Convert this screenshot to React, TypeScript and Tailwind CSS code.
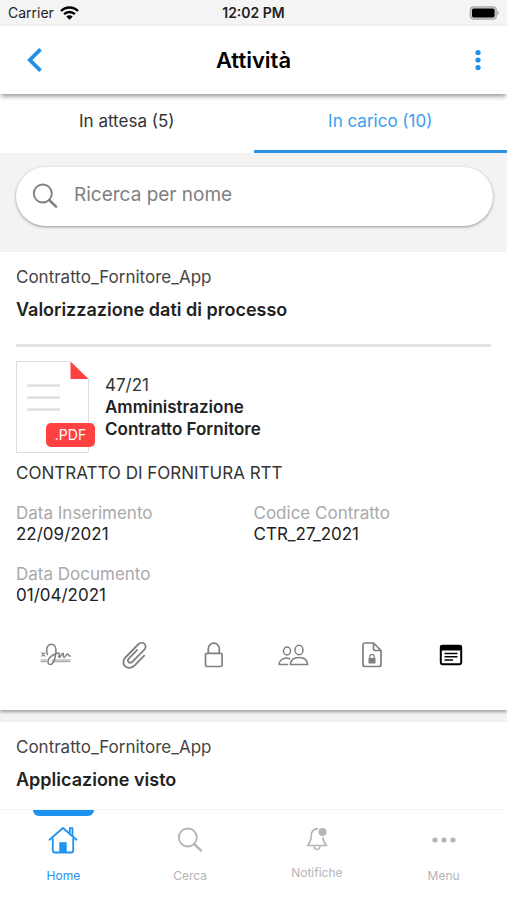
import type { ReactNode } from "react";

const SignatureIcon = () => (
  <svg width="32" height="24" viewBox="0 0 32 24" fill="none" stroke="currentColor" strokeLinecap="round" strokeLinejoin="round">
    <path d="M1.800 9.800l3 3.400M4.800 9.800l-3 3.400" strokeWidth="1.200" />
    <path
      d="M7.500 11.500C5.500 7 7 1.200 11.500 1.200c5 0 5 6.800 3.800 12.300-.9 4.400-2.600 8-5 8-2 0-2.700-2-2.100-4.200.8-3 4-4.900 6.900-6.300 2.600-1.200 4.200-1.300 4.300.2 0 1.500-1.600 2.800-.3 3.100 1.600.3 2.800-4.200 4-4 1 .2-.5 3.900 1 4.200 1.400.2 2-3.800 3.500-3.600 1.300.2.400 2.500 2.600 2.100"
      strokeWidth="1.500"
    />
    <path d="M1 17h5.500M12.500 17h17.500M1 18.700h5.500M12 18.700h18" strokeWidth=".8" />
  </svg>
);

const ClipIcon = () => (
  <svg width="26" height="28" viewBox="0 0 26 28" fill="none" stroke="currentColor" strokeWidth="1.800" strokeLinecap="round" strokeLinejoin="round">
    <path d="M22.200 14.600l-9.500 9.700c-3 3-7.300 3.300-9.700.9-2.400-2.400-2.100-6.300.8-9.200L16.100 3.500c2-2 4.700-2.200 6.400-.6 1.700 1.700 1.400 4.300-.6 6.300L10.500 20.700c-1.200 1.200-2.900 1.400-3.900.4s-.8-2.500.4-3.700l8.300-8.500" />
  </svg>
);

const LockIcon = () => (
  <svg width="22" height="28" viewBox="0 0 22 28" fill="none" stroke="currentColor" strokeWidth="1.700">
    <rect x="2.500" y="12.300" width="16.600" height="13.200" rx="1.500" />
    <path d="M5.300 12.300V7.700a5.500 5.500 0 0 1 11 0v4.600" />
  </svg>
);

const PeopleIcon = () => (
  <svg width="32" height="24" viewBox="0 0 32 24" fill="none" stroke="currentColor" strokeWidth="1.500" strokeLinecap="round" strokeLinejoin="round">
    <ellipse cx="10" cy="8" rx="3.500" ry="4" />
    <ellipse cx="22" cy="7" rx="4" ry="4.800" />
    <path d="M12.800 15.700c-4.500-1.800-10.200.3-10.800 5.700h8.500M13.300 21.400c.5-4.600 4-6.800 8.700-6.800s8.200 2.200 8.700 6.800z" />
  </svg>
);

const FileLockIcon = () => (
  <svg width="22" height="28" viewBox="0 0 22 28" fill="none" stroke="currentColor" strokeWidth="1.700" strokeLinejoin="round">
    <path d="M12.500 2H4a2 2 0 0 0-2 2v19.500a2 2 0 0 0 2 2h14a2 2 0 0 0 2-2V9.500zM12.500 2v5.500a2 2 0 0 0 2 2H20" />
    <path d="M8.800 17.500v-2a2.200 2.200 0 0 1 4.400 0v2" strokeWidth="1.200" />
    <rect x="7.500" y="17" width="7" height="5.500" rx=".6" fill="currentColor" stroke="none" />
  </svg>
);

const NoteIcon = () => (
  <svg width="24" height="22" viewBox="0 0 24 22" fill="none">
    <rect x="1.800" y="1.800" width="20.400" height="18.400" rx="2" stroke="currentColor" strokeWidth="2" />
    <path d="M1 6.500V3a2 2 0 0 1 2-2h18a2 2 0 0 1 2 2v3.500z" fill="currentColor" />
    <path d="M5.500 9.500h13M5.500 12.800h13M5.500 16h8.500" stroke="currentColor" strokeWidth="1.600" />
  </svg>
);

const SearchIcon = () => (
  <svg width="28" height="28" viewBox="-1 -1 28 28" fill="none" stroke="currentColor" strokeWidth="1.900" strokeLinecap="round">
    <circle cx="10.800" cy="10.500" r="9" />
    <path d="M17.200 17l6.800 6.600" strokeWidth="2.500" />
  </svg>
);

const HomeIcon = () => (
  <svg width="30" height="28" viewBox="0 0 30 28" fill="none" stroke="currentColor" strokeWidth="1.800" strokeLinecap="round" strokeLinejoin="round">
    <path d="M1.500 13.700L15 2l13.500 11.700" />
    <path d="M4.800 13v11.500a2 2 0 0 0 2 2h16.400a2 2 0 0 0 2-2V13" />
    <path d="M21.800 6.500V2.200h2.700v7" />
    <rect x="11.300" y="16.200" width="7.400" height="10.300" fill="currentColor" stroke="none" />
  </svg>
);

const BellIcon = () => (
  <svg width="28" height="25" viewBox="0 0 28 25" fill="none" stroke="currentColor" strokeWidth="1.600" strokeLinecap="round" strokeLinejoin="round">
    <path d="M14.500 2.600c-3.800.5-6.300 3.400-6.300 7.200 0 4.500-.7 6.700-3.800 9.700h19.200c-2.500-2.500-3.500-4.500-3.700-8" />
    <path d="M11 20.500c.3 2 1.500 3 3 3s2.700-1 3-3" />
    <circle cx="19.500" cy="6" r="4" fill="currentColor" stroke="none" />
  </svg>
);

const DotsIcon = () => (
  <svg width="28" height="28" viewBox="0 0 28 28" fill="currentColor">
    <circle cx="5" cy="14" r="2.600" />
    <circle cx="14" cy="14" r="2.600" />
    <circle cx="23" cy="14" r="2.600" />
  </svg>
);

const actions = [
  { label: "Firma", icon: <SignatureIcon /> },
  { label: "Allegati", icon: <ClipIcon /> },
  { label: "Blocca", icon: <LockIcon /> },
  { label: "Utenti", icon: <PeopleIcon /> },
  { label: "Documento protetto", icon: <FileLockIcon /> },
  { label: "Note", icon: <NoteIcon />, active: true },
];

const navItems = [
  { label: "Home", icon: <HomeIcon />, active: true },
  { label: "Cerca", icon: <SearchIcon /> },
  { label: "Notifiche", icon: <BellIcon /> },
  { label: "Menu", icon: <DotsIcon /> },
];

function StatusBar() {
  return (
    <div className="grid h-[26px] shrink-0 grid-cols-3 items-center bg-[#f4f4f4] px-2 text-sm text-[#222]">
      <div className="flex items-center gap-1.5">
        Carrier
        <svg width="19" height="14" viewBox="0 0 19 14" fill="none" stroke="#000" strokeWidth="2.400">
          <path d="M1 5C5.700.3 13.300.3 18 5M4.100 8.200c3-3 7.800-3 10.800 0" />
          <path d="M6.300 10.500a4.500 4.500 0 0 1 6.400 0L9.500 13.800z" fill="#000" stroke="none" />
        </svg>
      </div>
      <div className="text-center font-semibold">12:02 PM</div>
      <svg className="justify-self-end" width="30" height="14" viewBox="0 0 30 14">
        <rect x="1.300" y=".8" width="26" height="12.400" rx="3.500" fill="#ccc" stroke="#aaa" strokeWidth="1.200" />
        <rect x="3" y="2.500" width="22.600" height="9" rx="1.800" fill="#000" />
        <path d="M28.300 4.500c2 .8 2 4.200 0 5z" fill="#aaa" />
      </svg>
    </div>
  );
}

function Header() {
  return (
    <header className="relative z-10 grid h-[68px] shrink-0 grid-cols-[1fr_auto_1fr] items-center bg-white px-[19px] shadow-[0_3px_5px_-1px_rgba(0,0,0,0.45)]">
      <button aria-label="Indietro" className="flex size-8 items-center justify-center text-[#1f8fe8]">
        <svg width="18" height="26" viewBox="0 0 18 26" fill="none" stroke="currentColor" strokeWidth="3.800">
          <path d="M14.500 2.300L3.800 13l10.700 10.700" />
        </svg>
      </button>
      <h1 className="text-[22px] font-semibold text-black">Attività</h1>
      <button aria-label="Altre opzioni" className="flex h-8 w-5 items-center justify-center justify-self-end text-[#1f8fe8]">
        <svg width="6" height="22" viewBox="0 0 6 22" fill="currentColor">
          <circle cx="3" cy="3.500" r="2.600" />
          <circle cx="3" cy="11" r="2.600" />
          <circle cx="3" cy="18.500" r="2.600" />
        </svg>
      </button>
    </header>
  );
}

function Field({ label, value }: { label: string; value: string }) {
  return (
    <div className="leading-[21px]">
      <dt className="text-[#a9a9a9]">{label}</dt>
      <dd className="text-[#222]">{value}</dd>
    </div>
  );
}

function PdfThumb() {
  return (
    <div className="relative h-[92px] w-[73px] shrink-0">
      <svg width="73" height="92" viewBox="0 0 73 92" fill="none">
        <path d="M54.500.5H.5v91h72V18" stroke="#ddd" />
        <path d="M54.500.5l18 17.500h-18z" fill="#ff4141" />
        <path d="M11 24.500h33M11 36.500h33M11 48.500h33" stroke="#e0e0e0" strokeWidth="2.400" />
      </svg>
      <span className="absolute -right-1.5 bottom-1.5 flex h-6 w-[49px] items-center justify-center rounded-[5px] bg-[#ff4141] text-sm text-white">
        .PDF
      </span>
    </div>
  );
}

function Card({ process, title, children }: { process: string; title: string; children?: ReactNode }) {
  return (
    <article className="bg-white px-4 pt-3 shadow-[0_2px_3px_rgba(0,0,0,0.35)]">
      <p className="leading-[26px] text-[#444]">{process}</p>
      <h2 className="mt-1.5 text-lg leading-7 font-semibold text-[#222]">{title}</h2>
      {children}
    </article>
  );
}

export default function App() {
  return (
    <div className="flex h-screen flex-col bg-[#f3f3f3] font-['Inter','Liberation_Sans',sans-serif] text-[17px]">
      <StatusBar />
      <Header />
      <div role="tablist" className="grid h-[59px] shrink-0 grid-cols-2 bg-white">
        <button role="tab" aria-selected="false" className="border-b-3 border-transparent text-[#333]">
          In attesa (5)
        </button>
        <button role="tab" aria-selected="true" className="border-b-3 border-[#2a93e8] text-[#3a9dec]">
          In carico (10)
        </button>
      </div>

      <main className="min-h-0 flex-1 overflow-hidden">
        <div className="pt-3.5 pr-3.5 pb-[26px] pl-4">
          <label className="flex h-[59px] items-center gap-[15px] rounded-full bg-white pr-6 pb-0.5 pl-[15px] text-[#808080] shadow-[0_1px_3px_rgba(0,0,0,0.4)]">
            <SearchIcon />
            <input
              type="text"
              aria-label="Ricerca per nome"
              placeholder="Ricerca per nome"
              className="min-w-0 flex-1 text-[19px] outline-none placeholder:text-[#808080]"
            />
          </label>
        </div>

        <div className="space-y-3">
          <Card process="Contratto_Fornitore_App" title="Valorizzazione dati di processo">
            <hr className="mt-5 border-t-3 border-[#e2e2e2]" />
            <div className="mt-3.5 flex items-center gap-4">
              <PdfThumb />
              <div className="leading-[22px] text-[#222]">
                <p className="text-[#333]">47/21</p>
                <p className="font-semibold">Amministrazione</p>
                <p className="font-semibold">Contratto Fornitore</p>
              </div>
            </div>
            <p className="mt-2 leading-6 text-[#333]">CONTRATTO DI FORNITURA RTT</p>
            <dl className="mt-[18px] grid grid-cols-2 gap-y-[19px]">
              <Field label="Data Inserimento" value="22/09/2021" />
              <Field label="Codice Contratto" value="CTR_27_2021" />
              <Field label="Data Documento" value="01/04/2021" />
            </dl>
            <div className="mt-[31px] grid grid-cols-6 pb-[37px]">
              {actions.map((a) => (
                <button
                  key={a.label}
                  aria-label={a.label}
                  className={`flex h-9 items-center justify-center ${a.active ? "text-black" : "text-[#808080]"}`}
                >
                  {a.icon}
                </button>
              ))}
            </div>
          </Card>
          <Card process="Contratto_Fornitore_App" title="Applicazione visto">
            <hr className="mt-5 border-t-3 border-[#e2e2e2]" />
          </Card>
        </div>
      </main>

      <nav className="relative grid h-[91px] shrink-0 grid-cols-4 border-t border-[#f3f3f3] bg-white text-xs">
        {navItems.map((n) => (
          <a
            key={n.label}
            href="#"
            className={`flex flex-col items-center ${n.active ? "text-[#1f93f0]" : "text-[#b5b5b5]"}`}
          >
            <span className={`h-1.5 w-[61px] rounded-b-md ${n.active ? "bg-[#1f93f0]" : ""}`} />
            <span className="mt-2.5">{n.icon}</span>
            <span className="mt-3.5 leading-4">{n.label}</span>
          </a>
        ))}
      </nav>
    </div>
  );
}
